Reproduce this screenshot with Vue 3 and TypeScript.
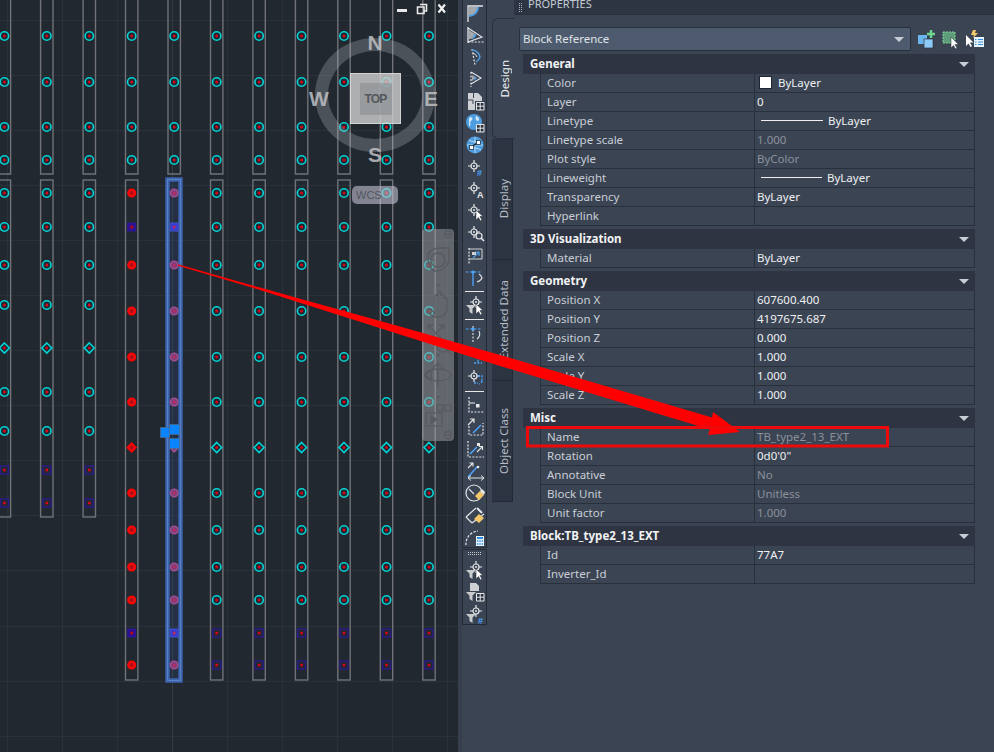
<script setup lang="ts">
type Kind = 'circle' | 'diamond' | 'square'
type Tone = 'cyan' | 'red' | 'sel'
interface Marker { x: number; y: number; kind: Kind; tone: Tone }
interface Column { x: number; tone: Tone; bottom: number }
interface Row { label: string; value?: string; dim?: boolean; swatch?: boolean; line?: number }
interface Section { title: string; rows: Row[] }
type Tool = { id: string } | { sep: true }

const columnXs = [4.4, 46.8, 89.3, 131.7, 174.2, 216.7, 259.1, 301.6, 344, 386.5, 429]
const columns: Column[] = columnXs.map((x, i) => ({
  x,
  tone: i === 3 ? 'red' : i === 4 ? 'sel' : 'cyan',
  bottom: i < 3 ? 517 : 680,
}))

const markers: Marker[] = []
columns.forEach((c, i) => {
  for (const y of [36, 82, 127, 160]) markers.push({ x: c.x, y, kind: 'circle', tone: 'cyan' })
  const low: [number, Kind][] = i < 3
    ? [[193, 'circle'], [227, 'circle'], [265, 'circle'], [305, 'circle'], [348, 'diamond'], [392, 'circle'], [431, 'circle'], [470, 'square'], [503, 'square']]
    : [[193, 'circle'], [227, i < 5 ? 'square' : 'circle'], [265, 'circle'], [311, 'circle'], [357, 'circle'], [402, 'circle'], [447.5, 'diamond'], [493, 'circle'], [530, 'circle'], [567, 'circle'], [600, 'circle'], [633, 'square'], [665, i < 5 ? 'circle' : 'square']]
  for (const [y, kind] of low) markers.push({ x: c.x, y, kind, tone: c.tone })
})

const gridH = [20, 75, 130, 185, 240, 295, 350, 405, 460, 515, 570, 626, 681, 736]
const gridV = [7, 62, 117, 227, 282, 337, 392, 447]
const diamond = (m: Marker, r: number) => `${m.x},${m.y - r} ${m.x + r},${m.y} ${m.x},${m.y + r} ${m.x - r},${m.y}`

const toolsA: Tool[] = [
  { id: 'ang' }, { id: 'tri' }, { id: 'arcdash' }, { id: 'tridash' }, { id: 'plan' }, { id: 'globegrid' }, { id: 'globenet' },
  { id: 'hash' }, { id: 'hairA' }, { id: 'hairCursor' }, { id: 'hairZoom' }, { id: 'boxArrow' }, { id: 'nodeArc' }, { sep: true },
  { id: 'funnelCursor' }, { sep: true },
  { id: 'nodeArcDash' }, { id: 'boxBlue' }, { id: 'hairArc' }, { sep: true },
  { id: 'cornerDash' }, { id: 'arrowDash' }, { id: 'cornerArrow' }, { id: 'lineArrows' }, { id: 'circleBrush' }, { id: 'brush' }, { id: 'arcCalc' },
]
const toolsB = ['funnelCursor', 'funnelGrid', 'funnelHash']

const tabs = [
  { name: 'Design', active: true },
  { name: 'Display', active: false },
  { name: 'Extended Data', active: false },
  { name: 'Object Class', active: false },
]

const sections: Section[] = [
  { title: 'General', rows: [
    { label: 'Color', value: 'ByLayer', swatch: true },
    { label: 'Layer', value: '0' },
    { label: 'Linetype', value: 'ByLayer', line: 62 },
    { label: 'Linetype scale', value: '1.000', dim: true },
    { label: 'Plot style', value: 'ByColor', dim: true },
    { label: 'Lineweight', value: 'ByLayer', line: 61 },
    { label: 'Transparency', value: 'ByLayer' },
    { label: 'Hyperlink' },
  ] },
  { title: '3D Visualization', rows: [{ label: 'Material', value: 'ByLayer' }] },
  { title: 'Geometry', rows: [
    { label: 'Position X', value: '607600.400' },
    { label: 'Position Y', value: '4197675.687' },
    { label: 'Position Z', value: '0.000' },
    { label: 'Scale X', value: '1.000' },
    { label: 'Scale Y', value: '1.000' },
    { label: 'Scale Z', value: '1.000' },
  ] },
  { title: 'Misc', rows: [
    { label: 'Name', value: 'TB_type2_13_EXT', dim: true },
    { label: 'Rotation', value: '0d0\'0"' },
    { label: 'Annotative', value: 'No', dim: true },
    { label: 'Block Unit', value: 'Unitless', dim: true },
    { label: 'Unit factor', value: '1.000', dim: true },
  ] },
  { title: 'Block:TB_type2_13_EXT', rows: [
    { label: 'Id', value: '77A7' },
    { label: 'Inverter_Id' },
  ] },
]
</script>

<template>
  <div class="root">
    <svg class="defs" width="0" height="0">
      <defs>
        <symbol id="hair" viewBox="0 0 20 20" overflow="visible">
          <circle cx="9" cy="9" r="3" fill="none" stroke="#e6e8ea" stroke-width="1.2" />
          <path d="M9 3V6M9 12V15M3 9H6M12 9H15" stroke="#e6e8ea" stroke-width="1.2" />
          <circle cx="9" cy="9" r="1" fill="#e6e8ea" />
        </symbol>
        <symbol id="cursor" viewBox="0 0 20 20" overflow="visible">
          <path d="M11 9V19L13.500 16.500L15.500 20L17 19L15 15.500H18Z" fill="#fff" stroke="#20262f" stroke-width=".5" />
        </symbol>
        <symbol id="funnel" viewBox="0 0 20 20" overflow="visible">
          <path d="M1 10H11L7.500 13.500V19L4.500 17V13.500Z" fill="#c9cbcd" />
        </symbol>
        <symbol id="smallgrid" viewBox="0 0 20 20" overflow="visible">
          <path d="M11.500 11.500H19V19H11.500ZM15.200 11.500V19M11.500 15.200H19" fill="#2b323e" stroke="#e6e8ea" stroke-width="1" />
        </symbol>

        <symbol id="ang" viewBox="0 0 20 20">
          <path d="M3 19V3H18" fill="none" stroke="#e4e6e8" stroke-width="1.300" />
          <path d="M4 4H14A10 10 0 0 1 4 14Z" fill="#4d9de0" />
          <path d="M4 4H12A8 8 0 0 1 4 12Z" fill="#a4a7ab" />
        </symbol>
        <symbol id="tri" viewBox="0 0 20 20">
          <path d="M3 2V18" stroke="#e4e6e8" stroke-width="1.300" />
          <path d="M3 17H19" stroke="#e4e6e8" stroke-width="1.200" stroke-dasharray="2 1.400" />
          <path d="M3 3L17 12L3 17" fill="none" stroke="#e4e6e8" stroke-width="1.100" />
          <path d="M4 5L11 9.500A7 7 0 0 1 4 14Z" fill="#a4a7ab" />
          <path d="M9.500 8.500L11.500 9.800A8 8 0 0 1 8 14L7 13A6 6 0 0 0 9.500 8.500Z" fill="#4d9de0" />
        </symbol>
        <symbol id="arcdash" viewBox="0 0 20 20">
          <path d="M7 2L10 18" stroke="#e4e6e8" stroke-width="1.200" stroke-dasharray="2 1.500" />
          <path d="M7 3A9 9 0 0 1 15 10A9 9 0 0 1 11 15" fill="none" stroke="#4d9de0" stroke-width="1.400" />
          <path d="M8 6A6 6 0 0 1 12 10" fill="none" stroke="#e4e6e8" stroke-width="1" />
        </symbol>
        <symbol id="tridash" viewBox="0 0 20 20">
          <path d="M6 3V18" stroke="#e4e6e8" stroke-width="1.200" stroke-dasharray="2 1.500" />
          <path d="M6 3L16 9L6 15" fill="none" stroke="#e4e6e8" stroke-width="1.100" />
          <path d="M7 6L11 8.500L7 12Z" fill="#a4a7ab" />
          <path d="M10 7.500L12 9L9 12Z" fill="#4d9de0" />
        </symbol>
        <symbol id="plan" viewBox="0 0 20 20">
          <path d="M3 2H8V7H9V2H13L17 6V10H10V19H3Z" fill="#cfd1d4" />
          <path d="M3 9H8M8 9V13" stroke="#3b4453" stroke-width="1" />
          <use href="#smallgrid" width="20" height="20" />
        </symbol>
        <symbol id="globegrid" viewBox="0 0 20 20">
          <circle cx="9" cy="9" r="8" fill="#4d9de0" />
          <path d="M4 5C7 3 9 6 6 8C4 10 7 13 4 13ZM11 3C14 4 15 7 13 8C11 8 10 5 11 3Z" fill="#d6e8f6" />
          <use href="#smallgrid" width="20" height="20" />
        </symbol>
        <symbol id="globenet" viewBox="0 0 20 20">
          <circle cx="10" cy="10" r="8.500" fill="#4d9de0" />
          <path d="M2 10H18M10 2V18M4 5Q10 9 16 5M4 15Q10 11 16 15" fill="none" stroke="#cfe3f4" stroke-width=".8" />
          <path d="M6 12L14 7" stroke="#1e3347" stroke-width="1.500" />
          <rect x="4.500" y="10.500" width="4" height="4" fill="#fff" stroke="#1e3347" stroke-width=".8" />
          <rect x="11.500" y="5.500" width="4" height="4" fill="#fff" stroke="#1e3347" stroke-width=".8" />
        </symbol>
        <symbol id="hash" viewBox="0 0 20 20" overflow="visible">
          <use href="#hair" width="20" height="20" />
          <text x="12" y="19" class="glyph" fill="#4da6ff">#</text>
        </symbol>
        <symbol id="hairA" viewBox="0 0 20 20" overflow="visible">
          <use href="#hair" width="20" height="20" />
          <text x="12" y="19" class="glyph" fill="#e6e8ea">A</text>
        </symbol>
        <symbol id="hairCursor" viewBox="0 0 20 20">
          <use href="#hair" width="20" height="20" />
          <use href="#cursor" width="20" height="20" />
        </symbol>
        <symbol id="hairZoom" viewBox="0 0 20 20">
          <use href="#hair" width="20" height="20" />
          <circle cx="14" cy="13" r="3" fill="none" stroke="#e6e8ea" stroke-width="1.200" />
          <path d="M16 15L19 18" stroke="#e6e8ea" stroke-width="1.600" />
        </symbol>
        <symbol id="boxArrow" viewBox="0 0 20 20">
          <path d="M4 3V19" stroke="#e4e6e8" stroke-width="1.200" stroke-dasharray="2 1.400" />
          <path d="M4 4H17V14H4" fill="none" stroke="#e4e6e8" stroke-width=".9" />
          <path d="M8 13L14 7M10 7H14V11" fill="none" stroke="#4d9de0" stroke-width="1.200" />
          <rect x="7" y="7" width="4" height="3" fill="#cfd1d4" />
        </symbol>
        <symbol id="nodeArc" viewBox="0 0 20 20">
          <path d="M1 5H16" stroke="#4da6ff" stroke-width="1.100" stroke-dasharray="2.500 1.500" />
          <path d="M8 6V19" stroke="#4da6ff" stroke-width="1.300" />
          <path d="M14 7A7 7 0 0 1 17 11A7 7 0 0 1 12 15" fill="none" stroke="#e4e6e8" stroke-width="1.100" />
          <circle cx="8" cy="5" r="1.600" fill="#4da6ff" />
        </symbol>
        <symbol id="funnelCursor" viewBox="0 0 20 20">
          <use href="#hair" width="20" height="20" x="2" y="-2" />
          <use href="#funnel" width="20" height="20" />
          <use href="#cursor" width="20" height="20" />
        </symbol>
        <symbol id="funnelGrid" viewBox="0 0 20 20">
          <path d="M5 1H11L14 4V9H5Z" fill="#cfd1d4" />
          <use href="#funnel" width="20" height="20" />
          <use href="#smallgrid" width="20" height="20" />
        </symbol>
        <symbol id="funnelHash" viewBox="0 0 20 20" overflow="visible">
          <use href="#hair" width="20" height="20" x="2" y="-2" />
          <use href="#funnel" width="20" height="20" />
          <text x="13" y="20" class="glyph" fill="#4da6ff">#</text>
        </symbol>
        <symbol id="nodeArcDash" viewBox="0 0 20 20">
          <path d="M1 6H16" stroke="#4da6ff" stroke-width="1.100" stroke-dasharray="2.500 1.500" />
          <path d="M8 3V19" stroke="#e4e6e8" stroke-width="1.100" stroke-dasharray="2 1.500" />
          <path d="M14 8A6 6 0 0 1 12 16" fill="none" stroke="#e4e6e8" stroke-width="1.100" />
          <circle cx="8" cy="6" r="1.600" fill="#4da6ff" />
        </symbol>
        <symbol id="boxBlue" viewBox="0 0 20 20">
          <rect x="2" y="3" width="9" height="7" fill="#cfd1d4" />
          <path d="M9 8H17M13 8V18M9 18H17" stroke="#4da6ff" stroke-width="1.300" stroke-dasharray="2 1.400" />
        </symbol>
        <symbol id="hairArc" viewBox="0 0 20 20">
          <use href="#hair" width="20" height="20" />
          <path d="M13 9H17V14M9 16H13M17 14A4 4 0 0 1 14 17" fill="none" stroke="#4da6ff" stroke-width="1.300" stroke-dasharray="2 1.400" />
        </symbol>
        <symbol id="cornerDash" viewBox="0 0 20 20">
          <path d="M4 2V17H19" fill="none" stroke="#e4e6e8" stroke-width="1.200" stroke-dasharray="2 1.400" />
          <path d="M4 8H10" stroke="#e4e6e8" stroke-width="1.100" />
          <rect x="11" y="9" width="3.500" height="3.500" fill="#e6e8ea" />
        </symbol>
        <symbol id="arrowDash" viewBox="0 0 20 20">
          <path d="M4 9V18H18V6" fill="none" stroke="#e4e6e8" stroke-width="1.200" stroke-dasharray="2 1.400" />
          <path d="M3 8L9 2M5 2H9V6" fill="none" stroke="#e4e6e8" stroke-width="1.200" />
          <path d="M8 16L16 8" stroke="#4da6ff" stroke-width="1.400" />
        </symbol>
        <symbol id="cornerArrow" viewBox="0 0 20 20">
          <path d="M3 2V18H19" fill="none" stroke="#e4e6e8" stroke-width="1.200" stroke-dasharray="2 1.400" />
          <path d="M5 15L12 8" stroke="#4da6ff" stroke-width="1.400" />
          <path d="M12 13L17 8M14 7.500H17.500V11" fill="none" stroke="#e4e6e8" stroke-width="1.100" />
          <rect x="12" y="4" width="3" height="3" fill="#e6e8ea" />
        </symbol>
        <symbol id="lineArrows" viewBox="0 0 20 20">
          <path d="M3 16L12 6" stroke="#4da6ff" stroke-width="1.400" />
          <path d="M3 7L8 2M4.500 2H8V5.500" fill="none" stroke="#e4e6e8" stroke-width="1.100" />
          <path d="M3 17H19M16 14.500L19 17L16 19.500M6 14.500L3 17L6 19.500" fill="none" stroke="#e4e6e8" stroke-width="1" />
          <circle cx="13" cy="6" r="1.300" fill="#e6e8ea" />
        </symbol>
        <symbol id="circleBrush" viewBox="0 0 20 20">
          <circle cx="9" cy="10" r="8" fill="none" stroke="#e4e6e8" stroke-width="1.200" />
          <path d="M4 6L9 11" stroke="#e4e6e8" stroke-width="1.100" />
          <path d="M10 13L15 8L19 12L14 17Z" fill="#f4c76b" />
          <path d="M15 8L17 6L20 9L19 12Z" fill="#e6e8ea" />
        </symbol>
        <symbol id="brush" viewBox="0 0 20 20">
          <path d="M1 12L7 18M1 12L11 3M7 18L19 9" fill="none" stroke="#e4e6e8" stroke-width="1.200" />
          <path d="M9 14L14 9L19 13L14 18Z" fill="#f4c76b" />
          <path d="M12 3L17 8" stroke="#e6e8ea" stroke-width="2" />
        </symbol>
        <symbol id="arcCalc" viewBox="0 0 20 20">
          <path d="M1 18A13 13 0 0 1 13 4" fill="none" stroke="#e4e6e8" stroke-width="1.200" stroke-dasharray="2.500 1.400" />
          <rect x="11" y="9" width="8" height="10" fill="#e8f2fb" />
          <rect x="12" y="10" width="6" height="2" fill="#2e8fe0" />
          <path d="M12 14H18M12 17H18" stroke="#2e8fe0" stroke-width="1.500" stroke-dasharray="1.400 .9" />
        </symbol>
      </defs>
    </svg>

    <main class="canvas">
      <svg class="drawing" width="458" height="752" viewBox="0 0 458 752">
        <g stroke="#29313a" stroke-width="1">
          <line v-for="y in gridH" :key="'h' + y" x1="0" x2="458" :y1="y + .5" :y2="y + .5" />
          <line v-for="x in gridV" :key="'v' + x" y1="0" y2="752" :x1="x + .5" :x2="x + .5" />
        </g>
        <line x1="172.500" x2="172.500" y1="0" y2="752" stroke="#323b46" stroke-width="1" />

        <g fill="none" stroke="#707277" stroke-width="1.400">
          <template v-for="c in columns" :key="c.x">
            <path :d="`M${c.x - 6.2} -2V174H${c.x + 6.2}V-2`" />
            <rect v-if="c.tone !== 'sel'" :x="c.x - 6.2" y="180" width="12.4" :height="c.bottom - 180" />
          </template>
        </g>
        <rect x="167.500" y="179.500" width="13" height="501" fill="rgba(60, 100, 180, .14)" stroke="#3a62ad" stroke-width="4.500" />
        <rect x="167.500" y="179.500" width="13" height="501" fill="none" stroke="#5b7fc0" stroke-width="1.200" />

        <g v-for="(m, i) in markers" :key="i" :class="['marker', m.tone]">
          <template v-if="m.kind === 'circle'">
            <circle :cx="m.x" :cy="m.y" :r="m.tone === 'cyan' ? 4.2 : 3.8" class="mk-shape" />
            <circle :cx="m.x" :cy="m.y" r="1.500" class="mk-core" />
          </template>
          <template v-else-if="m.kind === 'diamond'">
            <polygon :points="diamond(m, m.tone === 'cyan' ? 5 : 4.4)" class="mk-shape" />
            <circle :cx="m.x" :cy="m.y" r="1.500" class="mk-core" />
          </template>
          <template v-else>
            <rect :x="m.x - 4" :y="m.y - 4" width="8" height="8" class="mk-square" />
            <circle :cx="m.x" :cy="m.y" r="1.500" class="mk-core" />
          </template>
        </g>

        <g fill="#0a84ff" stroke="#5a6470" stroke-width=".6">
          <rect x="160.300" y="427.300" width="9.400" height="10.400" />
          <rect x="169.300" y="424.300" width="10.400" height="10.400" />
          <rect x="169.300" y="438.300" width="10.400" height="10.400" />
        </g>
      </svg>

      <div class="winctl">
        <svg width="54" height="16" viewBox="0 0 54 16">
          <rect x="5" y="8" width="10" height="3" fill="#e8e8e8" />
          <path d="M28 3.500H34.500V10H32M25.500 6H32V12.500H25.500Z" fill="none" stroke="#e8e8e8" stroke-width="1.600" />
          <path d="M46.500 3.500L53 11.500M53 3.500L46.500 11.500" stroke="#f2f2f2" stroke-width="2.200" />
        </svg>
      </div>

      <div class="compass">
        <div class="ring"></div>
        <span class="dir n">N</span>
        <span class="dir s">S</span>
        <span class="dir w">W</span>
        <span class="dir e">E</span>
        <div class="cube"><div class="cubeface">TOP</div></div>
      </div>
      <div class="wcs">WCS<span class="wcs-caret"></span></div>

      <div class="navbar">
        <svg width="32" height="212" viewBox="0 0 32 212" fill="none" stroke="#585b60" stroke-width="1.300">
          <circle cx="26" cy="5" r="3.500" />
          <path d="M23.500 5H28.500" />
          <path d="M6 27C6 22 12 19 18 19H27V29C27 36 22 42 14 42C9 42 6 36 6 27Z" />
          <circle cx="16" cy="31" r="7" />
          <path d="M14 55L16 58L18 55" fill="#585b60" stroke="none" />
          <path d="M6 82C8 78 11 82 13 85V68C13 65 16 65 16 68V64C16 62 19 62 19 64V67C19 65 22 65 22 67V70C22 68 25 68 25 70V79C25 84 22 88 17 88H13C10 88 8 85 6 82Z" />
          <path d="M6 96L22 112M22 96L6 112M6 96H11M6 96V101M22 96H17M22 96V101" />
          <circle cx="21" cy="117" r="6" />
          <path d="M25 121L30 126" />
          <path d="M14 125L16 128L18 125" fill="#585b60" stroke="none" />
          <ellipse cx="16" cy="146" rx="13" ry="6" />
          <path d="M16 134V158M10 140L16 134L22 140M3 146L9 141V151Z" />
          <path d="M14 167L16 170L18 167" fill="#585b60" stroke="none" />
          <rect x="15" y="176" width="6" height="6" />
          <rect x="23" y="176" width="6" height="6" />
          <rect x="4" y="184" width="16" height="13" />
          <path d="M9 187L15 190.500L9 194Z" fill="#585b60" />
          <circle cx="26" cy="206" r="3.500" />
          <path d="M23.500 206H28.500" />
        </svg>
      </div>
    </main>

    <div class="gutter"></div>

    <aside class="tools">
      <div class="toolbar first">
        <template v-for="(t, i) in toolsA" :key="i">
          <div v-if="'sep' in t" class="tsep"></div>
          <div v-else class="tool">
            <svg width="20" height="20" viewBox="0 0 20 20"><use :href="'#' + t.id" width="20" height="20" /></svg>
          </div>
        </template>
      </div>
      <div class="toolbar second">
        <div class="tdots"></div>
        <div v-for="id in toolsB" :key="id" class="tool">
          <svg width="20" height="20" viewBox="0 0 20 20"><use :href="'#' + id" width="20" height="20" /></svg>
        </div>
      </div>
    </aside>

    <nav class="tabs">
      <div v-for="t in tabs" :key="t.name" :class="['tab', { active: t.active }]">
        <span>{{ t.name }}</span>
      </div>
    </nav>

    <section class="palette">
      <header class="title">
        <span class="grip"></span>
        <span class="title-text">PROPERTIES</span>
      </header>
      <div class="body">
        <div class="selector">
          <div class="combo">
            <span class="combo-text">Block Reference</span>
            <i class="caret"></i>
          </div>
          <div class="quick">
            <svg width="22" height="22" viewBox="0 0 22 22">
              <rect x="2" y="7" width="9" height="9" fill="#6cb6ef" />
              <rect x="8" y="11" width="9" height="9" fill="#8ccbf7" stroke="#2e3542" stroke-width=".7" />
              <path d="M15 2V10M11 6H19" stroke="#6ed68e" stroke-width="2.400" />
            </svg>
            <svg width="22" height="22" viewBox="0 0 22 22">
              <rect x="3" y="4" width="12" height="11" fill="#5f9d7a" stroke="#7fd49a" stroke-width="1" stroke-dasharray="2 1" />
              <path d="M11 9V20L13.500 17.500L15.500 21L17 20L15 16.500H18.500Z" fill="#fff" stroke="#20262f" stroke-width=".5" />
            </svg>
            <svg width="22" height="22" viewBox="0 0 22 22">
              <path d="M2 7V18L4.500 15.500L6.500 19L8 18L6 14.500H9.500Z" fill="#fff" />
              <path d="M9 2L7 7H10L9 10L14 5H11L12 2Z" fill="#f4c76b" />
              <rect x="10" y="9" width="10" height="10" fill="#e8f2fb" />
              <path d="M11 11.500H12.500M14 11.500H19M11 14H12.500M14 14H19M11 16.500H12.500M14 16.500H19" stroke="#2e8fe0" stroke-width="1.200" />
            </svg>
          </div>
        </div>

        <div v-for="s in sections" :key="s.title" class="group">
          <div class="group-head">
            <b>{{ s.title }}</b>
            <i class="caret"></i>
          </div>
          <div class="grid">
            <div v-for="r in s.rows" :key="r.label" class="row">
              <div class="label">{{ r.label }}</div>
              <div :class="['value', { dim: r.dim }]">
                <span v-if="r.swatch" class="swatch"></span>
                <span v-if="r.line" class="lt" :style="{ width: r.line + 'px' }"></span>
                {{ r.value }}
              </div>
            </div>
          </div>
        </div>
      </div>
    </section>

    <svg class="annotation" width="994" height="752" viewBox="0 0 994 752">
      <polygon points="178,264.300 260,287.600 300,298.800 400,326.600 500,354.900 712,417.500 713,412 740,432 708,435 710,429.500 500,365.900 400,334.600 300,302.800 260,290 178,265.700" fill="#ff0000" />
      <rect x="527.500" y="427.500" width="360" height="18.500" fill="none" stroke="#ee0a0a" stroke-width="3" />
    </svg>
  </div>
</template>

<style>
html, body { margin: 0; padding: 0; background: #3b4453; }
.glyph { font: 700 9px "Liberation Sans", sans-serif; }
</style>

<style scoped>
.root {
  position: relative;
  display: flex;
  width: 994px;
  height: 752px;
  overflow: hidden;
  background: #3b4453;
  font-family: "Noto Sans", "Open Sans", sans-serif;
  font-size: 11.5px;
  color: #c9ced6;
}
.defs { position: absolute; }

.canvas { position: relative; width: 458px; height: 752px; flex: none; background: #212830; overflow: hidden; }
.drawing { display: block; }
.marker.cyan .mk-shape { fill: #212830; stroke: #00d4d6; stroke-width: 1.600; }
.marker.cyan .mk-core { fill: #d8001c; }
.marker.cyan .mk-square { fill: #212830; stroke: #2d1a92; stroke-width: 1.300; }
.marker.red .mk-shape { fill: #ee1010; stroke: #ff0000; stroke-width: 1.500; }
.marker.red .mk-core { fill: #c40812; stroke: #7a1020; stroke-width: .6; }
.marker.red .mk-square { fill: #2d0f9b; stroke: #2d1a92; stroke-width: 1; }
.marker.sel .mk-shape { fill: #7c3f7e; stroke: #a14e90; stroke-width: 1.500; }
.marker.sel .mk-core { fill: #c02a5a; }
.marker.sel .mk-square { fill: #3a3ccf; stroke: #3f52c8; stroke-width: 1; }

.winctl { position: absolute; left: 392px; top: 1px; line-height: 0; }

.compass { position: absolute; left: 310px; top: 28px; width: 130px; height: 134px; }
.ring {
  position: absolute; left: 5px; top: 10px; width: 120px; height: 114px;
  box-sizing: border-box; border: 13px solid rgba(190, 195, 200, .28); border-radius: 50%;
}
.dir {
  position: absolute; font-family: "Liberation Sans", sans-serif; font-weight: 700; font-size: 21px;
  line-height: 20px; color: rgba(190, 192, 195, .85); transform: translate(-50%, -50%);
}
.n { left: 65px; top: 15px; }
.s { left: 65px; top: 127px; }
.w { left: 9px; top: 71px; }
.e { left: 121px; top: 71px; }
.cube {
  position: absolute; left: 40px; top: 45px; width: 51px; height: 51px; box-sizing: border-box;
  display: flex; align-items: center; justify-content: center;
  background: rgba(205, 205, 205, .82); border: 1px solid rgba(225, 225, 225, .7);
}
.cubeface {
  width: 32px; height: 32px; background: rgba(130, 136, 140, .5); color: #53585c;
  display: flex; align-items: center; justify-content: center;
  font: 700 12px "Liberation Sans", sans-serif; letter-spacing: -.9px;
}
.wcs {
  position: absolute; left: 352px; top: 186px; width: 46px; height: 18px; box-sizing: border-box; padding-left: 4px;
  border-radius: 5px; background: rgba(190, 190, 205, .62); color: #52555e;
  font: 11px/18px "Liberation Sans", sans-serif;
}
.navbar {
  position: absolute; left: 422px; top: 229px; width: 32px; height: 212px; border-radius: 4px;
  background: rgba(160, 162, 165, .52); line-height: 0;
}

.gutter { width: 4px; flex: none; background: #373f4e; }

.tools { width: 25px; flex: none; display: flex; flex-direction: column; gap: 1px; }
.toolbar { box-sizing: border-box; background: #3b4453; border: 1px solid #232a35; border-top: 0; display: flex; flex-direction: column; align-items: center; }
.toolbar.first { height: 548px; padding-top: 2px; }
.toolbar.second { height: 76px; border-top: 1px solid #232a35; }
.tool { width: 23px; height: 22px; display: flex; align-items: center; justify-content: center; flex: none; }
.tool svg { display: block; overflow: visible; }
.tsep { width: 19px; height: 6px; flex: none; display: flex; background: linear-gradient(#e8e8e8, #e8e8e8) center / 100% 1px no-repeat; }
.tdots {
  width: 14px; height: 3px; margin: 2px 0 4px; flex: none;
  background: linear-gradient(#3b4453, #3b4453) 0 1px / 100% 1px no-repeat, repeating-linear-gradient(90deg, #c4c8ce 0 1px, transparent 1px 2px);
}

.tabs { width: 27px; flex: none; box-sizing: border-box; padding: 18px 0 0 5px; display: flex; flex-direction: column; }
.tab {
  width: 21px; height: 121px; box-sizing: border-box; padding-left: 2px; background: #2d3441; border-bottom: 1px solid #232a35;
  border-right: 1px solid #232a35; display: flex; align-items: center; justify-content: center; color: #b5bcc6;
}
.tab.active { width: 22px; padding-left: 1px; background: #3b4453; border: 1px solid #28303c; border-right: 0; border-radius: 6px 0 0 6px; color: #eceef1; }
.tab span { writing-mode: vertical-rl; transform: rotate(180deg); white-space: nowrap; font-size: 11.5px; }

.palette { flex: 1; min-width: 0; display: flex; flex-direction: column; }
.title { height: 14px; flex: none; background: #2e3542; display: flex; align-items: center; overflow: hidden; padding-left: 5px; }
.grip {
  width: 3px; height: 9px; margin-right: 6px; flex: none;
  background: linear-gradient(90deg, transparent 1px, #2e3542 1px 2px, transparent 2px), repeating-linear-gradient(#aab0b9 0 1px, transparent 1px 2px);
}
.title-text { font-size: 11px; color: #c6ccd4; line-height: 14px; position: relative; top: -3px; }

.body { flex: 1; padding: 12px 19px 0 5px; border-top: 1px solid #28303c; }
.selector { display: flex; align-items: center; height: 24px; margin-bottom: 3px; }
.combo {
  width: 392px; height: 24px; box-sizing: border-box; padding: 0 3px; flex: none; display: flex; align-items: center; justify-content: space-between;
  background: #4e5b6e; border: 1px solid #28303c; border-radius: 2px; color: #dfe3e8;
}
.combo-text { margin-bottom: 2px; }
.combo .caret { margin-right: 3px; }
.quick { display: flex; gap: 2px; margin-left: 5px; }
.caret { width: 0; height: 0; border: 5px solid transparent; border-top: 5px solid #c9ced6; border-bottom: 0; display: block; }

.group { margin: 0 0 3px 4px; }
.group-head {
  height: 20px; box-sizing: border-box; padding: 0 6px 2px 7px; background: #2e3441; display: flex; align-items: center; justify-content: space-between;
  color: #f2f3f5;
}
.group-head .caret { margin-top: 2px; }
.group-head b { font-weight: 700; font-size: 11.5px; }
.grid { margin-left: 17px; border-left: 1px solid #28303c; border-right: 1px solid #28303c; }
.row { display: flex; height: 19px; box-sizing: border-box; border-bottom: 1px solid #28303c; align-items: center; }
.label { width: 214px; flex: none; box-sizing: border-box; padding-left: 6px; height: 18px; line-height: 18px; border-right: 1px solid #28303c; white-space: nowrap; }
.value { flex: 1; padding: 0 0 1px 2px; height: 18px; box-sizing: border-box; display: flex; align-items: center; gap: 5px; line-height: 17px; color: #eef0f2; white-space: nowrap; }
.value.dim { color: #8a919c; }
.swatch { width: 13px; height: 13px; background: #fff; border: 1px solid #20262f; box-sizing: border-box; margin: 0 1px 0 2px; }
.lt { height: 1px; background: #f0f0f0; margin-left: 4px; }

.annotation { position: absolute; left: 0; top: 0; pointer-events: none; }
</style>
